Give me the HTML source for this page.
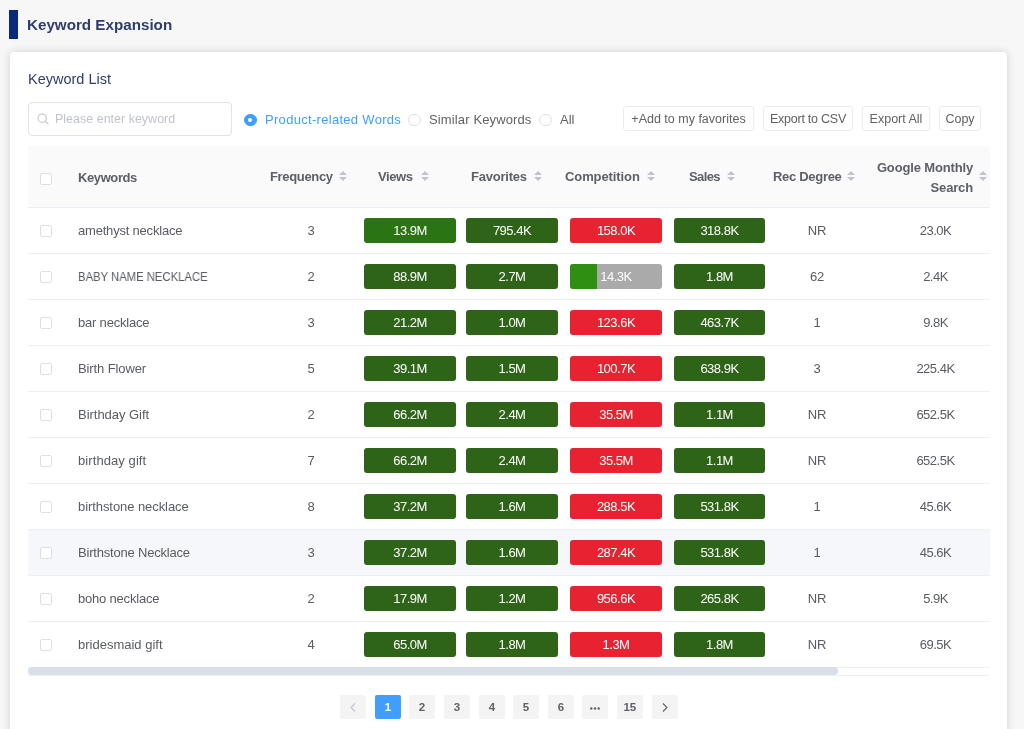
<!DOCTYPE html><html><head><meta charset="utf-8"><style>
*{box-sizing:border-box;margin:0;padding:0}
html,body{width:1024px;height:729px;overflow:hidden}
body{background:#f7f7f7;font-family:"Liberation Sans",sans-serif;position:relative;color:#606266}
.abs{position:absolute;white-space:nowrap}
.tbar{left:9px;top:10px;width:9px;height:29px;background:#0a2a7c;position:absolute}
.title{left:27px;top:15px;font-size:15.2px;font-weight:bold;color:#2f3d6c;line-height:20px}
.card{position:absolute;left:10px;top:51.7px;width:996.5px;height:700px;background:#fff;border-radius:4px;
 box-shadow:0 0 8px rgba(0,0,0,0.16)}
.kl{left:28px;top:70px;font-size:14.5px;color:#2e3d6b;line-height:18px}
.inp{position:absolute;left:28px;top:101.5px;width:204px;height:34px;border:1px solid #e0e3e9;border-radius:4px;background:#fff}
.ph{left:55px;top:111px;font-size:12.5px;color:#c0c4cc;line-height:16px}
.radio{position:absolute;width:12.5px;height:12.5px;border-radius:50%;border:1px solid #dcdfe6;background:#fff}
.radio.on{background:#409eff;border-color:#409eff}
.radio.on::after{content:"";position:absolute;left:50%;top:50%;width:4px;height:4px;margin:-2px 0 0 -2px;background:#fff;border-radius:50%}
.rt{top:112px;font-size:13px;line-height:16px;color:#606266}
.btn{position:absolute;top:106px;height:25px;border:1px solid #ececec;border-radius:3px;background:#fff;
 font-size:12.5px;color:#606266;line-height:24px;text-align:center;white-space:nowrap}
.thead{position:absolute;left:28px;top:146px;width:962px;height:62px;background:#fafafa;border-bottom:1px solid #ebeef5}
.th{position:absolute;font-size:13px;font-weight:bold;color:#5d6066;line-height:20px;white-space:nowrap}
.si{position:absolute}
.row{position:absolute;left:28px;width:962px;height:46px;border-bottom:1px solid #edeff5;background:#fff}
.row.hl{background:#f5f7fa}
.cb{position:absolute;left:12px;width:12px;height:12px;border:1px solid #dcdfe6;border-radius:2px;background:#fff}
.td{position:absolute;font-size:13px;color:#595c63;line-height:16px;white-space:nowrap;letter-spacing:-0.2px}
.c{text-align:center}
.abs,.th,.td,.btn,.bar span,.pg{will-change:transform}
.bar{position:absolute;height:24.5px;border-radius:3px;color:#fff;font-size:13px;line-height:26px;text-align:center;letter-spacing:-0.5px;overflow:hidden}
.bar.g{background:#2e6418}
.bar.g1{background:#2b7414}
.bar.r{background:#e82231}
.bar.p{background:#aaaaaa}
.bar.p .fill{position:absolute;left:0;top:0;bottom:0;width:26.5px;background:#2f8f12}
.bar span{position:relative}
.scroll{position:absolute;left:28px;top:667px;width:810px;height:8px;border-radius:4px;background:#d8dfe9}
.scrolltrack{position:absolute;left:28px;top:675px;width:961px;height:1px;background:#ebeef5}
.pg{position:absolute;top:695px;width:25.7px;height:24px;background:#f4f4f5;border-radius:2px;font-size:11.5px;font-weight:bold;color:#606266;text-align:center;line-height:25px}
.pg.on{background:#409eff;color:#fff}
.pg.dis{color:#c0c4cc}
</style></head><body>
<div class="tbar"></div><div class="abs title">Keyword Expansion</div>
<div class="card"></div>
<div class="abs kl">Keyword List</div>
<div class="inp"></div>
<svg class="abs" style="left:37px;top:113px" width="12" height="12" viewBox="0 0 12 12"><circle cx="5.2" cy="5.2" r="4.2" fill="none" stroke="#c0c4cc" stroke-width="1.1"/><path d="M8.3 8.3L11 11" stroke="#c0c4cc" stroke-width="1.1" stroke-linecap="round"/></svg>
<div class="abs ph">Please enter keyword</div>
<div class="radio on" style="left:244px;top:113.8px"></div>
<div class="abs rt" style="left:265px;color:#409eff;letter-spacing:0.3px">Product-related Words</div>
<div class="radio" style="left:408.2px;top:113.8px"></div>
<div class="abs rt" style="left:429px;letter-spacing:0.13px">Similar Keywords</div>
<div class="radio" style="left:539px;top:113.8px"></div>
<div class="abs rt" style="left:560px">All</div>
<div class="btn" style="left:623px;width:131px">+Add to my favorites</div>
<div class="btn" style="left:763px;width:90px;letter-spacing:-0.25px">Export to CSV</div>
<div class="btn" style="left:862px;width:68px">Export All</div>
<div class="btn" style="left:938.5px;width:42px">Copy</div>
<div class="thead"></div>
<div class="cb" style="left:40px;top:173px;position:absolute"></div>
<div class="th" style="left:78px;top:168px;letter-spacing:-0.4px">Keywords</div>
<div class="th" style="left:270px;top:167px;letter-spacing:-0.33px">Frequency</div>
<svg class="si" style="left:339.3px;top:171px" width="8" height="10" viewBox="0 0 8 10"><path d="M4 0L8 4H0Z" fill="#bfc3cc"/><path d="M4 10L8 6H0Z" fill="#bfc3cc"/></svg>
<div class="th" style="left:378px;top:167px;letter-spacing:-0.4px">Views</div>
<svg class="si" style="left:420.5px;top:171px" width="8" height="10" viewBox="0 0 8 10"><path d="M4 0L8 4H0Z" fill="#bfc3cc"/><path d="M4 10L8 6H0Z" fill="#bfc3cc"/></svg>
<div class="th" style="left:471px;top:167px;letter-spacing:-0.23px">Favorites</div>
<svg class="si" style="left:533.6px;top:171px" width="8" height="10" viewBox="0 0 8 10"><path d="M4 0L8 4H0Z" fill="#bfc3cc"/><path d="M4 10L8 6H0Z" fill="#bfc3cc"/></svg>
<div class="th" style="left:565.4px;top:167px;letter-spacing:-0.1px">Competition</div>
<svg class="si" style="left:646.7px;top:171px" width="8" height="10" viewBox="0 0 8 10"><path d="M4 0L8 4H0Z" fill="#bfc3cc"/><path d="M4 10L8 6H0Z" fill="#bfc3cc"/></svg>
<div class="th" style="left:689.3px;top:167px;letter-spacing:-0.6px">Sales</div>
<svg class="si" style="left:726.7px;top:171px" width="8" height="10" viewBox="0 0 8 10"><path d="M4 0L8 4H0Z" fill="#bfc3cc"/><path d="M4 10L8 6H0Z" fill="#bfc3cc"/></svg>
<div class="th" style="left:773.2px;top:167px;letter-spacing:-0.3px">Rec Degree</div>
<svg class="si" style="left:846.6px;top:171px" width="8" height="10" viewBox="0 0 8 10"><path d="M4 0L8 4H0Z" fill="#bfc3cc"/><path d="M4 10L8 6H0Z" fill="#bfc3cc"/></svg>
<div class="th" style="left:870px;top:157.5px;width:103px;text-align:right;letter-spacing:-0.15px">Google Monthly<br>Search</div>
<svg class="si" style="left:979.3px;top:171px" width="8" height="10" viewBox="0 0 8 10"><path d="M4 0L8 4H0Z" fill="#bfc3cc"/><path d="M4 10L8 6H0Z" fill="#bfc3cc"/></svg>
<div class="row" style="top:208px">
<div class="cb" style="top:17px"></div>
<div class="td" style="left:50px;top:15px;letter-spacing:-0.2px">amethyst necklace</div>
<div class="td c" style="left:263px;width:40px;top:15px">3</div>
<div class="bar g1" style="left:336px;width:92px;top:10px"><span>13.9M</span></div>
<div class="bar g" style="left:438px;width:92px;top:10px"><span>795.4K</span></div>
<div class="bar r" style="left:542px;width:92px;top:10px"><span>158.0K</span></div>
<div class="bar g" style="left:646px;width:91px;top:10px"><span>318.8K</span></div>
<div class="td c" style="left:768.5px;width:40px;top:15px">NR</div>
<div class="td c" style="left:867px;width:81px;top:15px;letter-spacing:-0.5px">23.0K</div>
</div>
<div class="row" style="top:254px">
<div class="cb" style="top:17px"></div>
<div class="td" style="left:50px;top:15px;letter-spacing:0;transform:scaleX(0.868);transform-origin:0 0">BABY NAME NECKLACE</div>
<div class="td c" style="left:263px;width:40px;top:15px">2</div>
<div class="bar g" style="left:336px;width:92px;top:10px"><span>88.9M</span></div>
<div class="bar g" style="left:438px;width:92px;top:10px"><span>2.7M</span></div>
<div class="bar p" style="left:542px;width:92px;top:10px"><div class="fill"></div><span>14.3K</span></div>
<div class="bar g" style="left:646px;width:91px;top:10px"><span>1.8M</span></div>
<div class="td c" style="left:768.5px;width:40px;top:15px">62</div>
<div class="td c" style="left:867px;width:81px;top:15px;letter-spacing:-0.5px">2.4K</div>
</div>
<div class="row" style="top:300px">
<div class="cb" style="top:17px"></div>
<div class="td" style="left:50px;top:15px;letter-spacing:-0.2px">bar necklace</div>
<div class="td c" style="left:263px;width:40px;top:15px">3</div>
<div class="bar g" style="left:336px;width:92px;top:10px"><span>21.2M</span></div>
<div class="bar g" style="left:438px;width:92px;top:10px"><span>1.0M</span></div>
<div class="bar r" style="left:542px;width:92px;top:10px"><span>123.6K</span></div>
<div class="bar g" style="left:646px;width:91px;top:10px"><span>463.7K</span></div>
<div class="td c" style="left:768.5px;width:40px;top:15px">1</div>
<div class="td c" style="left:867px;width:81px;top:15px;letter-spacing:-0.5px">9.8K</div>
</div>
<div class="row" style="top:346px">
<div class="cb" style="top:17px"></div>
<div class="td" style="left:50px;top:15px;letter-spacing:-0.11px">Birth Flower</div>
<div class="td c" style="left:263px;width:40px;top:15px">5</div>
<div class="bar g" style="left:336px;width:92px;top:10px"><span>39.1M</span></div>
<div class="bar g" style="left:438px;width:92px;top:10px"><span>1.5M</span></div>
<div class="bar r" style="left:542px;width:92px;top:10px"><span>100.7K</span></div>
<div class="bar g" style="left:646px;width:91px;top:10px"><span>638.9K</span></div>
<div class="td c" style="left:768.5px;width:40px;top:15px">3</div>
<div class="td c" style="left:867px;width:81px;top:15px;letter-spacing:-0.5px">225.4K</div>
</div>
<div class="row" style="top:392px">
<div class="cb" style="top:17px"></div>
<div class="td" style="left:50px;top:15px;letter-spacing:-0.03px">Birthday Gift</div>
<div class="td c" style="left:263px;width:40px;top:15px">2</div>
<div class="bar g" style="left:336px;width:92px;top:10px"><span>66.2M</span></div>
<div class="bar g" style="left:438px;width:92px;top:10px"><span>2.4M</span></div>
<div class="bar r" style="left:542px;width:92px;top:10px"><span>35.5M</span></div>
<div class="bar g" style="left:646px;width:91px;top:10px"><span>1.1M</span></div>
<div class="td c" style="left:768.5px;width:40px;top:15px">NR</div>
<div class="td c" style="left:867px;width:81px;top:15px;letter-spacing:-0.5px">652.5K</div>
</div>
<div class="row" style="top:438px">
<div class="cb" style="top:17px"></div>
<div class="td" style="left:50px;top:15px;letter-spacing:0.08px">birthday gift</div>
<div class="td c" style="left:263px;width:40px;top:15px">7</div>
<div class="bar g" style="left:336px;width:92px;top:10px"><span>66.2M</span></div>
<div class="bar g" style="left:438px;width:92px;top:10px"><span>2.4M</span></div>
<div class="bar r" style="left:542px;width:92px;top:10px"><span>35.5M</span></div>
<div class="bar g" style="left:646px;width:91px;top:10px"><span>1.1M</span></div>
<div class="td c" style="left:768.5px;width:40px;top:15px">NR</div>
<div class="td c" style="left:867px;width:81px;top:15px;letter-spacing:-0.5px">652.5K</div>
</div>
<div class="row" style="top:484px">
<div class="cb" style="top:17px"></div>
<div class="td" style="left:50px;top:15px;letter-spacing:-0.07px">birthstone necklace</div>
<div class="td c" style="left:263px;width:40px;top:15px">8</div>
<div class="bar g" style="left:336px;width:92px;top:10px"><span>37.2M</span></div>
<div class="bar g" style="left:438px;width:92px;top:10px"><span>1.6M</span></div>
<div class="bar r" style="left:542px;width:92px;top:10px"><span>288.5K</span></div>
<div class="bar g" style="left:646px;width:91px;top:10px"><span>531.8K</span></div>
<div class="td c" style="left:768.5px;width:40px;top:15px">1</div>
<div class="td c" style="left:867px;width:81px;top:15px;letter-spacing:-0.5px">45.6K</div>
</div>
<div class="row hl" style="top:530px">
<div class="cb" style="top:17px"></div>
<div class="td" style="left:50px;top:15px;letter-spacing:-0.2px">Birthstone Necklace</div>
<div class="td c" style="left:263px;width:40px;top:15px">3</div>
<div class="bar g" style="left:336px;width:92px;top:10px"><span>37.2M</span></div>
<div class="bar g" style="left:438px;width:92px;top:10px"><span>1.6M</span></div>
<div class="bar r" style="left:542px;width:92px;top:10px"><span>287.4K</span></div>
<div class="bar g" style="left:646px;width:91px;top:10px"><span>531.8K</span></div>
<div class="td c" style="left:768.5px;width:40px;top:15px">1</div>
<div class="td c" style="left:867px;width:81px;top:15px;letter-spacing:-0.5px">45.6K</div>
</div>
<div class="row" style="top:576px">
<div class="cb" style="top:17px"></div>
<div class="td" style="left:50px;top:15px;letter-spacing:-0.2px">boho necklace</div>
<div class="td c" style="left:263px;width:40px;top:15px">2</div>
<div class="bar g" style="left:336px;width:92px;top:10px"><span>17.9M</span></div>
<div class="bar g" style="left:438px;width:92px;top:10px"><span>1.2M</span></div>
<div class="bar r" style="left:542px;width:92px;top:10px"><span>956.6K</span></div>
<div class="bar g" style="left:646px;width:91px;top:10px"><span>265.8K</span></div>
<div class="td c" style="left:768.5px;width:40px;top:15px">NR</div>
<div class="td c" style="left:867px;width:81px;top:15px;letter-spacing:-0.5px">5.9K</div>
</div>
<div class="row" style="top:622px">
<div class="cb" style="top:17px"></div>
<div class="td" style="left:50px;top:15px;letter-spacing:0.0px">bridesmaid gift</div>
<div class="td c" style="left:263px;width:40px;top:15px">4</div>
<div class="bar g" style="left:336px;width:92px;top:10px"><span>65.0M</span></div>
<div class="bar g" style="left:438px;width:92px;top:10px"><span>1.8M</span></div>
<div class="bar r" style="left:542px;width:92px;top:10px"><span>1.3M</span></div>
<div class="bar g" style="left:646px;width:91px;top:10px"><span>1.8M</span></div>
<div class="td c" style="left:768.5px;width:40px;top:15px">NR</div>
<div class="td c" style="left:867px;width:81px;top:15px;letter-spacing:-0.5px">69.5K</div>
</div>
<div class="scrolltrack"></div><div class="scroll"></div>
<div class="pg dis" style="left:340.0px"><svg style="position:absolute;left:9.5px;top:8px" width="6" height="9" viewBox="0 0 6 9"><path d="M5 0.5L1 4.5L5 8.5" fill="none" stroke="#c0c4cc" stroke-width="1.1"/></svg></div>
<div class="pg on" style="left:374.6px">1</div>
<div class="pg " style="left:409.3px">2</div>
<div class="pg " style="left:443.9px">3</div>
<div class="pg " style="left:478.5px">4</div>
<div class="pg " style="left:513.1px">5</div>
<div class="pg " style="left:547.8px">6</div>
<div class="pg " style="left:582.4px"><svg style="position:absolute;left:8px;top:12px" width="10" height="3" viewBox="0 0 10 3"><circle cx="1.3" cy="1.5" r="1.2" fill="#606266"/><circle cx="5" cy="1.5" r="1.2" fill="#606266"/><circle cx="8.7" cy="1.5" r="1.2" fill="#606266"/></svg></div>
<div class="pg " style="left:617.0px">15</div>
<div class="pg " style="left:651.7px"><svg style="position:absolute;left:9.5px;top:8px" width="6" height="9" viewBox="0 0 6 9"><path d="M1 0.5L5 4.5L1 8.5" fill="none" stroke="#606266" stroke-width="1.1"/></svg></div>
</body></html>
